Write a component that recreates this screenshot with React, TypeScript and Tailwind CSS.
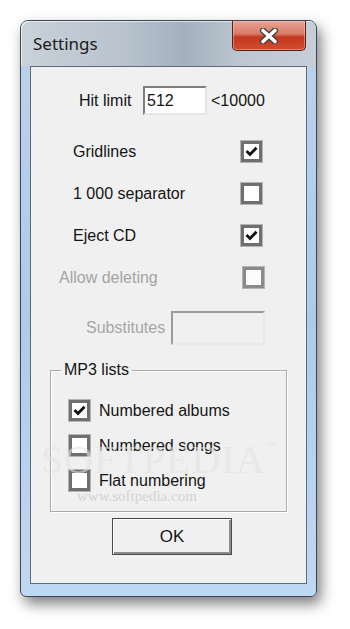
const font = { fontFamily: '"Liberation Sans", Arial, sans-serif' }

function Check({ checked, disabled }: { checked?: boolean; disabled?: boolean }) {
  return (
    <div
      className={`w-[21px] h-[21px] shrink-0 border-[3px] flex items-center justify-center ${
        disabled ? 'border-[#8a8a8a] bg-[#fbfbfb]' : 'border-[#6f6f6f] bg-white'
      } shadow-[0_0_0_1px_#b4b4b4]`}
    >
      {checked && (
        <svg width="15" height="15" viewBox="0 0 15 15">
          <polyline points="2.5,7 6,10.5 12.5,3.8" fill="none" stroke="#111" strokeWidth="2.8" />
        </svg>
      )}
    </div>
  )
}

function Row({ label, checked, pl, w, gray }: { label: string; checked?: boolean; pl: string; w: string; gray?: boolean }) {
  return (
    <div className={`flex items-center h-[21px] ${pl}`}>
      <div className={`${w} text-[16px] leading-none ${gray ? 'text-[#a3a3a3]' : 'text-[#141414]'}`}>{label}</div>
      <Check checked={checked} disabled={gray} />
    </div>
  )
}

function GroupItem({ label, checked }: { label: string; checked?: boolean }) {
  return (
    <div className="flex items-center h-[21px]">
      <Check checked={checked} />
      <span className="ml-[9px] text-[16px] leading-none text-[#141414]">{label}</span>
    </div>
  )
}

export default function App() {
  return (
    <div className="relative w-[350px] h-[629px] bg-white overflow-hidden pt-[20px] pl-[20px]" style={font}>
      {/* window */}
      <div className="w-[297px] h-[577px] rounded-t-[8px] rounded-b-[6px] border border-[#3b4756] flex flex-col bg-[linear-gradient(180deg,#c3ccd6_0px,#bfc9d3_45px,#b9d2ec_46px,#aecbea_300px,#c0d9f2_577px)] shadow-[4px_7px_14px_rgba(0,0,0,0.5)]">
        {/* title bar */}
        <div className="relative h-[45px] shrink-0 rounded-t-[7px] bg-[linear-gradient(90deg,#c9d1d9_0%,#b8c3ce_35%,#a4b0bc_55%,#bcc7d1_75%,#c6cfd8_100%)] shadow-[inset_1px_1px_0_rgba(255,255,255,0.6)]">
          <div className="absolute left-[12px] top-[10px] text-[17px] text-[#1b1b1b]" style={{ fontFamily: '"Noto Sans", "Open Sans", sans-serif' }}>
            Settings
          </div>
          <div className="absolute left-[211px] top-0 w-[74px] h-[30px] rounded-b-[5px] border border-t-0 border-[#5a2018] bg-[linear-gradient(180deg,#e7a394_0%,#d77a66_45%,#c3381f_55%,#cf4d31_100%)] shadow-[inset_0_0_0_1px_rgba(255,200,190,0.45)] flex items-center justify-center">
            <svg width="22" height="16" viewBox="0 0 22 16">
              <path d="M5 2.5 L17 13.5 M17 2.5 L5 13.5" stroke="#3d3d3d" strokeWidth="6" strokeLinecap="round" />
              <path d="M5 2.5 L17 13.5 M17 2.5 L5 13.5" stroke="#ffffff" strokeWidth="3.6" strokeLinecap="round" />
            </svg>
          </div>
        </div>

        {/* client area */}
        <div className="flex-1 mx-[9px] mb-[12px] border border-[#5f6b78] bg-[#f0f0f0] flex flex-col">
          <div className="flex items-center mt-[19px] h-[29px] pl-[48px]">
            <div className="w-[64px] text-[16px] leading-none text-[#141414]">Hit limit</div>
            <div className="w-[64px] h-[29px] bg-white border-2 border-t-[#7e7e7e] border-l-[#7e7e7e] border-r-[#e6e6e6] border-b-[#e6e6e6] flex items-center pl-[2px] text-[16px] text-[#141414]">
              512
            </div>
            <span className="ml-[4px] text-[16px] leading-none text-[#141414]">&lt;10000</span>
          </div>

          <div className="flex flex-col gap-[21px] mt-[26px]">
            <Row label="Gridlines" checked pl="pl-[42px]" w="w-[168px]" />
            <Row label="1 000 separator" pl="pl-[42px]" w="w-[168px]" />
            <Row label="Eject CD" checked pl="pl-[42px]" w="w-[168px]" />
            <Row label="Allow deleting" pl="pl-[28px]" w="w-[184px]" gray />
          </div>

          <div className="flex items-center mt-[23px] pl-[55px]">
            <div className="w-[85px] text-[16px] leading-none text-[#a6a6a6]">Substitutes</div>
            <div className="w-[94px] h-[34px] bg-[#f0f0f0] border-2 border-t-[#9a9a9a] border-l-[#9a9a9a] border-r-[#e9e9e9] border-b-[#e9e9e9]" />
          </div>

          <div className="relative ml-[19px] mt-[25px] w-[237px] h-[142px] border border-[#a9a9a9] shadow-[inset_1px_1px_0_#ffffff,1px_1px_0_#ffffff] pt-[29px] pl-[18px] flex flex-col gap-[14px]">
            <div className="absolute left-[10px] top-[-10px] px-[3px] bg-[#f0f0f0] text-[16px] leading-[18px] text-[#141414]">MP3 lists</div>
            <GroupItem label="Numbered albums" checked />
            <GroupItem label="Numbered songs" />
            <GroupItem label="Flat numbering" />
          </div>

          <div className="ml-[81px] mt-[6px] w-[120px] h-[37px] border border-[#4a4a4a] bg-[#f0f0f0] shadow-[inset_1px_1px_0_#ffffff,inset_-2px_-2px_0_#8c8c8c] flex items-center justify-center text-[17px] text-[#141414]">
            OK
          </div>
        </div>
      </div>

      {/* watermark */}
      <div className="pointer-events-none absolute left-[41px] top-[440px] text-[40px] leading-none tracking-[1px] text-[#e4e4e4] opacity-60" style={{ fontFamily: '"Liberation Serif", serif' }}>
        SOFTPEDIA<span className="text-[12px] align-top">™</span>
      </div>
      <div className="pointer-events-none absolute left-[77px] top-[489px] text-[15px] leading-none text-[#d4d4d4]" style={{ fontFamily: '"Liberation Serif", serif' }}>
        www.softpedia.com
      </div>
    </div>
  )
}
